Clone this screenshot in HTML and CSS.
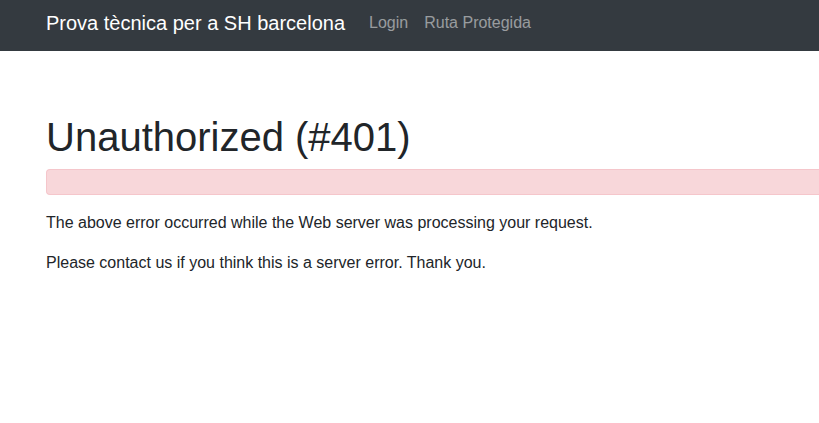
FILE: index.html
```html
<!DOCTYPE html>
<html lang="ca">
<head>
<meta charset="utf-8">
<title>Unauthorized (#401)</title>
<link rel="stylesheet" href="styles.css">
</head>
<body>
<header class="navbar">
  <div class="container nav-inner">
    <a class="brand" href="#">Prova tècnica per a SH barcelona</a>
    <nav class="nav">
      <a class="nav-link" href="#">Login</a>
      <a class="nav-link" href="#">Ruta Protegida</a>
    </nav>
  </div>
</header>
<main class="container main">
  <div class="site-error">
    <h1 class="title">Unauthorized (#401)</h1>
    <div class="alert"></div>
    <p class="text">The above error occurred while the Web server was processing your request.</p>
    <p class="text">Please contact us if you think this is a server error. Thank you.</p>
  </div>
</main>
</body>
</html>
```

FILE: styles.css
```css
* { box-sizing: border-box; }
html, body {
  margin: 0;
  padding: 0;
  overflow: hidden;
}
body {
  font-family: "Liberation Sans", Arial, Helvetica, sans-serif;
  font-size: 16px;
  line-height: 1.5;
  color: #212529;
  background: #fff;
}
.container {
  margin-left: 46px;
}
.navbar {
  background: #343a40;
  height: 51px;
}
.nav-inner {
  display: flex;
  align-items: center;
  height: 51px;
  padding-bottom: 6px;
}
.brand {
  color: #fff;
  font-size: 20px;
  line-height: 30px;
  text-decoration: none;
  margin-right: 16px;
  white-space: nowrap;
}
.nav {
  display: flex;
}
.nav-link {
  color: rgba(255, 255, 255, 0.5);
  text-decoration: none;
  padding: 8px;
  line-height: 24px;
}
.main {
  padding-top: 62px;
}
.title {
  font-size: 40px;
  font-weight: 500;
  line-height: 1.2;
  margin: 0 0 8px;
}
.alert {
  background: #f8d7da;
  border: 1px solid #f5c6cb;
  border-right: 0;
  border-radius: 4px 0 0 4px;
  color: #721c24;
  padding: 12px 20px;
  margin-bottom: 16px;
}
.text {
  margin: 0 0 16px;
}
```
